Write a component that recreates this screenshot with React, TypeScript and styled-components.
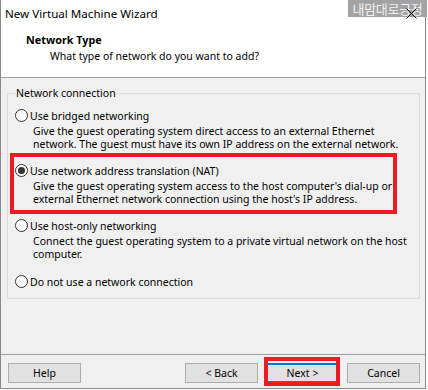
import styled, { createGlobalStyle } from 'styled-components';

const GlobalStyle = createGlobalStyle`
  body {
    margin: 0;
    background: #fff;
  }
`;

const Window = styled.div`
  position: relative;
  width: 426px;
  height: 389px;
  box-sizing: border-box;
  border: 1px solid #8a8a8a;
  border-top: none;
  display: flex;
  flex-direction: column;
  background: #f0f0f0;
  font-family: "Noto Sans", sans-serif;
  font-size: 10.5px;
  color: #000;
`;

const TitleBar = styled.div`
  height: 26px;
  display: flex;
  align-items: center;
  padding-left: 4px;
  background: #fff;
  font-size: 11.6px;
`;

const Watermark = styled.div`
  position: absolute;
  top: 0;
  right: -2px;
  width: 79px;
  height: 17px;
  background: #a3a3a3;
  color: #f2f2f2;
  font-family: "Noto Sans CJK KR", sans-serif;
  font-size: 13px;
  line-height: 17px;
  text-align: center;
  letter-spacing: -0.3px;
  white-space: nowrap;
`;

const CloseGlyph = styled.svg`
  position: absolute;
  top: 8px;
  right: 8px;
`;

const Header = styled.div`
  height: 52px;
  box-sizing: border-box;
  padding: 6px 0 0 25px;
  background: #fff;
  border-bottom: 1px solid #a0a0a0;
`;

const HeaderTitle = styled.div`
  font-weight: 700;
  font-size: 10.8px;
  line-height: 16px;
`;

const HeaderSub = styled.div`
  padding-left: 24px;
  line-height: 16px;
`;

const Body = styled.div`
  flex: 1;
  padding: 7px 0 0 6px;
`;

const Group = styled.fieldset`
  width: 413px;
  box-sizing: border-box;
  margin: 0;
  padding: 0 0 8px 6px;
  border: 1px solid #dcdcdc;
  display: flex;
  flex-direction: column;
`;

const Legend = styled.legend`
  padding: 0 1px;
  margin-left: 1px;
  line-height: 16px;
`;

const Option = styled.div<{ $top: number; $marked?: boolean }>`
  margin-top: ${p => p.$top}px;
  ${p =>
    p.$marked &&
    `
    margin-left: -4px;
    width: 387px;
    box-sizing: border-box;
    border: 4px solid #ed1c24;
    padding: 5px 0 4px 0;
  `}
`;

const RadioRow = styled.div`
  display: flex;
  align-items: center;
  height: 17px;
  gap: 2px;
`;

const Radio = styled.span<{ $checked?: boolean }>`
  width: 13px;
  height: 13px;
  box-sizing: border-box;
  border: 1px solid #333;
  border-radius: 50%;
  background: #fff;
  display: flex;
  align-items: center;
  justify-content: center;
  margin-left: 1px;

  &::after {
    content: '';
    display: ${p => (p.$checked ? 'block' : 'none')};
    width: 7px;
    height: 7px;
    border-radius: 50%;
    background: #333;
  }
`;

const Desc = styled.div`
  padding: 1px 0 0 19px;
  line-height: 13px;
`;

const Footer = styled.div`
  height: 34px;
  box-sizing: border-box;
  border-top: 1px solid #a0a0a0;
  display: flex;
  align-items: flex-start;
  padding: 8px 5px 0 7px;
  gap: 8px;
`;

const Spacer = styled.div`
  flex: 1;
`;

const Button = styled.button<{ $default?: boolean }>`
  position: relative;
  width: 73px;
  height: 20px;
  margin: 0;
  padding: 0;
  box-sizing: border-box;
  font: inherit;
  color: #000;
  background: #e1e1e1;
  border: 1px solid ${p => (p.$default ? '#0078d7' : '#adadad')};
  box-shadow: ${p => (p.$default ? 'inset 0 0 0 1px #0078d7' : 'none')};
`;

const Callout = styled.span`
  position: absolute;
  left: -3px;
  top: -7px;
  width: 76px;
  height: 29px;
  box-sizing: border-box;
  border: 4px solid #ed1c24;
`;

export default function App() {
  return (
    <>
      <GlobalStyle />
      <Window>
        <TitleBar>New Virtual Machine Wizard</TitleBar>
        <Watermark>내맘대로긍정</Watermark>
        <CloseGlyph width="11" height="11" viewBox="0 0 11 11">
          <path d="M0.5 0.5 L10.5 10.5 M10.5 0.5 L0.5 10.5" stroke="#111" strokeWidth="1" fill="none" />
        </CloseGlyph>
        <Header>
          <HeaderTitle>Network Type</HeaderTitle>
          <HeaderSub>What type of network do you want to add?</HeaderSub>
        </Header>
        <Body>
          <Group>
            <Legend>Network connection</Legend>
            <Option $top={6}>
              <RadioRow>
                <Radio />
                Use bridged networking
              </RadioRow>
              <Desc>
                Give the guest operating system direct access to an external Ethernet
                <br />
                network. The guest must have its own IP address on the external network.
              </Desc>
            </Option>
            <Option $top={2} $marked>
              <RadioRow>
                <Radio $checked />
                Use network address translation (NAT)
              </RadioRow>
              <Desc>
                Give the guest operating system access to the host computer's dial-up or
                <br />
                external Ethernet network connection using the host's IP address.
              </Desc>
            </Option>
            <Option $top={3}>
              <RadioRow>
                <Radio />
                Use host-only networking
              </RadioRow>
              <Desc>
                Connect the guest operating system to a private virtual network on the host
                <br />
                computer.
              </Desc>
            </Option>
            <Option $top={12}>
              <RadioRow>
                <Radio />
                Do not use a network connection
              </RadioRow>
            </Option>
          </Group>
        </Body>
        <Footer>
          <Button>Help</Button>
          <Spacer />
          <Button>&lt; Back</Button>
          <Button $default>
            Next &gt;
            <Callout />
          </Button>
          <Button>Cancel</Button>
        </Footer>
      </Window>
    </>
  );
}
